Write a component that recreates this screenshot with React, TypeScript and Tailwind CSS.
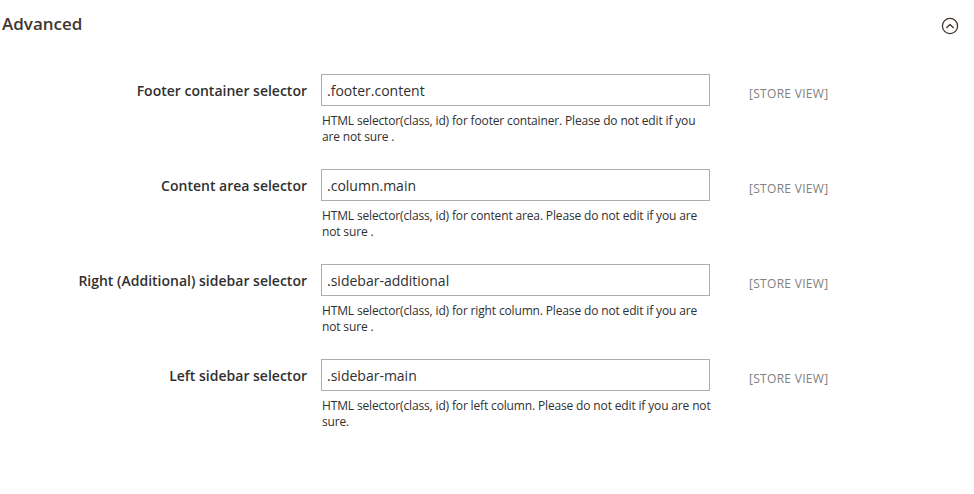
import React from "react";

const rows = [
  {
    label: "Footer container selector",
    value: ".footer.content",
    note: ["HTML selector(class, id) for footer container. Please do not edit if you", "are not sure ."],
  },
  {
    label: "Content area selector",
    value: ".column.main",
    note: ["HTML selector(class, id) for content area. Please do not edit if you are", "not sure ."],
  },
  {
    label: "Right (Additional) sidebar selector",
    value: ".sidebar-additional",
    note: ["HTML selector(class, id) for right column. Please do not edit if you are", "not sure ."],
  },
  {
    label: "Left sidebar selector",
    value: ".sidebar-main",
    note: ["HTML selector(class, id) for left column. Please do not edit if you are not", "sure."],
  },
];

export default function App() {
  return (
    <div
      className="w-[974px] h-[494px] bg-white text-[#303030]"
      style={{ fontFamily: '"Open Sans", "Liberation Sans", sans-serif' }}
    >
      <div className="flex items-center justify-between h-[48px] pl-[2px] pr-[15px]">
        <h2 className="text-[17px] font-semibold text-[#41362f] leading-[22px]">Advanced</h2>
        <svg width="18" height="18" viewBox="0 0 18 18" fill="none" className="mt-[3px]">
          <circle cx="9" cy="9" r="7.6" stroke="#41362f" strokeWidth="1.3" />
          <path d="M5.8 10.4 L9 7.4 L12.2 10.4" stroke="#41362f" strokeWidth="1.4" strokeLinecap="round" strokeLinejoin="round" />
        </svg>
      </div>
      <div className="flex flex-col gap-[24px] pt-[26px]">
        {rows.map((r) => (
          <div key={r.label} className="flex items-start">
            <label className="w-[307px] text-right text-[14px] font-semibold leading-[32px] pt-[1px] text-[#303030]">
              {r.label}
            </label>
            <div className="ml-[14px] w-[389px]">
              <input
                readOnly
                defaultValue={r.value}
                className="w-full h-[32px] border border-[#adadad] px-[5px] text-[14px] text-[#303030] outline-none bg-white"
                style={{ fontFamily: '"Open Sans", "Liberation Sans", sans-serif' }}
              />
              <div className="mt-[7px] text-[12px] leading-[16px] tracking-[-0.15px] text-[#303030] pl-[1px] whitespace-nowrap">
                {r.note.map((l, i) => (
                  <div key={i}>{l}</div>
                ))}
              </div>
            </div>
            <div className="ml-[39px] pt-[12px] text-[12px] leading-[16px] tracking-[0.3px] text-[#808080] uppercase whitespace-nowrap">
              [STORE VIEW]
            </div>
          </div>
        ))}
      </div>
    </div>
  );
}
